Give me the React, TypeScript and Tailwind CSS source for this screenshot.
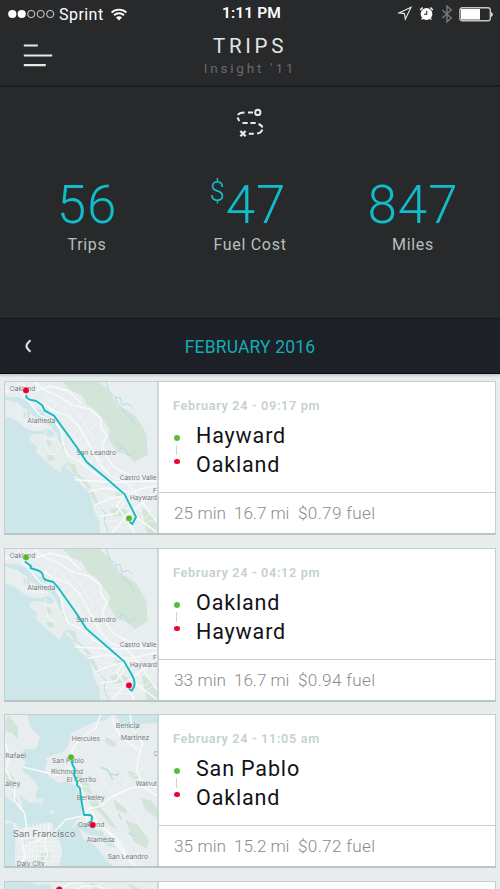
import type { ReactNode } from "react";

type Kind = "eastbay" | "bay" | "partial";
type Trip = {
  date: string;
  from: string;
  to: string;
  time: string;
  miles: string;
  fuel: string;
  map: Kind;
  reverse?: boolean;
  gap: string;
};

const trips: Trip[] = [
  { date: "February 24 - 09:17 pm", from: "Hayward", to: "Oakland", time: "25 min", miles: "16.7 mi", fuel: "$0.79 fuel", map: "eastbay", gap: "mb-[13px]" },
  { date: "February 24 - 04:12 pm", from: "Oakland", to: "Hayward", time: "33 min", miles: "16.7 mi", fuel: "$0.94 fuel", map: "eastbay", reverse: true, gap: "mb-3" },
  { date: "February 24 - 11:05 am", from: "San Pablo", to: "Oakland", time: "35 min", miles: "15.2 mi", fuel: "$0.72 fuel", map: "bay", gap: "mb-[13px]" },
];

const WATER = "#cce6ea";
const GREEN = "#d3e5d8";

function Place({ x, y, w, size = 20.5, children }: { x: number; y: number; w: number; size?: number; children: ReactNode }) {
  return (
    <text x={x} y={y} textLength={w} lengthAdjust="spacingAndGlyphs" fontSize={size} fill="#75797b" stroke="#f3f6f6" strokeWidth="1.2" paintOrder="stroke">
      {children}
    </text>
  );
}

function EastBayMap({ reverse }: { reverse?: boolean }) {
  return (
    <svg viewBox="15 22 456 453" className="block h-[151px] w-[152px] font-['Inter',sans-serif]">
      <rect x="0" y="0" width="500" height="500" fill="#e8eeef" />
      <path d="M187 22H298L330 50L352 95L378 104L410 128L440 180L443 240L405 262L380 240L350 232L325 190L330 165L290 110L262 92L245 60L215 48Z" fill={GREEN} />
      <path d="M200 262L225 270L232 298L262 318L275 345L290 370L300 400L285 385L266 350L250 322L225 300Z" fill={GREEN} />
      <path d="M330 405L360 395L385 410L370 425L340 425ZM425 400L455 415L471 440V475H440ZM345 350L368 360L360 372L345 365ZM70 115L85 105L90 125L75 132Z" fill={GREEN} />
      <path d="M15 126C35 128 52 140 76 160C96 172 115 172 132 166L150 162L163 178L150 190L129 178L100 180L89 188L92 200L112 214L108 232L140 262L180 294L188 274L204 262L199 278L210 288L224 302L241 330L264 350L276 380L282 410L298 440L300 475H15Z" fill={WATER} />
      <path d="M15 66L55 68L82 80L100 97L123 106L138 125L165 137L182 168L187 208L204 222L188 226L176 200L170 178L153 155L131 139L103 128L76 103L51 84L15 75Z" fill={WATER} />
      <path d="M89 186L102 179L129 178L154 188L185 208L188 226L204 236L200 262L188 274L180 294L140 262L108 232L112 214L92 200Z" fill="#e6edec" />
      <path d="M137 195L150 199L156 214L140 213Z M137 235L160 242L164 258L143 256Z" fill={GREEN} />
      <g fill="none" stroke="#b6dbe2" strokeWidth="3">
        <path d="M318 22L328 50L346 67L351 86L366 99L374 118L391 128L402 147M346 67L361 70L366 91L382 87L397 96" />
        <path d="M352 205L363 218L358 229M363 218L377 225L385 244L402 232M303 402L318 418L312 439L325 473" />
      </g>
      <g fill="none" stroke="#f8fafa" strokeWidth="4.5" strokeLinejoin="round">
        <path d="M72 22L70 50L77 66L95 79L137 92L160 108L207 125L240 158L300 270L329 302L375 320L405 350L471 444" />
        <path d="M102 22L135 48L179 66L215 90L269 104L302 130L302 155L320 182L306 215L325 255L345 279L387 300L425 312L471 323" />
        <path d="M15 52L50 40L106 48L150 35L205 48L244 86M70 62L120 122L165 142L183 168L190 210L205 244L240 260L280 295L326 318L376 360L410 428L471 473" />
        <path d="M223 315L334 322L471 320M265 350L320 340L390 351L471 331M282 392L330 372L408 355M300 425L348 418L374 383M337 473L390 414L471 350M376 360L350 390L404 474" />
      </g>
      <g fill="none" stroke="#f6f8f8" strokeWidth="2">
        <path d="M35 22L52 60M55 22L66 68M118 22L110 50M150 22L133 72M15 38L93 50M30 100L55 130L94 150L144 154M54 85L58 125M80 105L78 151M103 125L101 165M126 140L126 168M136 167L137 190L143 226L164 240L130 239M140 190L173 197L183 220" />
        <path d="M155 67L126 102M178 79L142 120M201 92L161 140M225 105L174 162M254 112L184 184M275 129L198 199M290 145L211 223M308 166L225 241M313 190L232 262M315 215L245 286M324 239L266 308M338 266L289 327M359 284L315 350M385 303L344 365M404 315L364 382M433 329L390 390M459 337L418 413M471 362L439 433" />
        <path d="M110 76L150 102L202 170L221 184L285 282L326 314M142 69L192 101L242 167L304 263M182 67L240 125L284 200M219 305L295 335L370 355M248 333L321 365L388 370M292 370L356 400L424 402M306 438L365 440L438 430M325 456L402 457L471 432" />
      </g>
      <Place x={29} y={50} w={77}>Oakland</Place>
      <Place x={82} y={145} w={84}>Alameda</Place>
      <Place x={229} y={242} w={119}>San Leandro</Place>
      <Place x={359} y={316} w={111}>Castro Valle</Place>
      <Place x={459} y={354} w={11}>F</Place>
      <Place x={390} y={377} w={81}>Hayward</Place>
      <path
        d={reverse
          ? "M76 61L93 73L91 79L111 85C124 88 130 94 130 108L137 115L160 121L174 137L230 216L258 260L326 319L373 360C389 391 410 413 402 436L395 447L389 443"
          : "M79 63L78 67L89 75L108 79L127 92L134 108L162 123L232 220L260 262L322 314L374 359L408 427L397 448L390 443"}
        fill="none" stroke="#14b9c2" strokeWidth="5.6" strokeLinejoin="round" strokeLinecap="round"
      />
      <circle cx="78" cy="47" r="9.5" fill={reverse ? "#56b72c" : "#e5002f"} stroke="#edf2f2" />
      <circle cx="387" cy="431" r="9.5" fill={reverse ? "#e5002f" : "#56b72c"} stroke="#edf2f2" />
    </svg>
  );
}

function BayMap() {
  return (
    <svg viewBox="15 22 456 453" className="block h-[151px] w-[152px] font-['Inter',sans-serif]">
      <rect x="0" y="0" width="500" height="500" fill="#e8eeef" />
      <path d="M82 22L92 60L120 87L112 117L100 126L75 122L58 146L79 163L64 187L95 211L116 239L105 263L115 282L95 287L57 262L68 285L65 310L42 286L15 265V335L45 345L60 365L145 344L158 350L162 376L180 402L187 439L177 475H337L307 445L286 414L250 393L237 363L216 359L227 339L245 328L242 272L229 236L201 221L175 227L146 204L134 184L142 160L132 151L188 133L204 115L214 75L282 44L319 36L335 22Z" fill={WATER} />
      <path d="M345 22L364 49L405 68L429 48L471 47V22Z" fill={WATER} />
      <path d="M15 350L35 344L46 375L45 475H15Z" fill={WATER} />
      <path d="M232 346L259 347L284 364L307 371L326 400L354 424L322 413L297 385L268 382L245 367L221 358Z" fill={WATER} />
      <path d="M111 276L127 268L131 279L120 290ZM147 308L162 306L165 317L151 319Z" fill="#e4eeea" />
      <path d="M26 22L54 58L55 97L37 76L16 70V40ZM15 190L41 208L48 247L20 233ZM33 255L55 280L47 297ZM224 178L248 195L244 210L263 224L278 260L304 303L326 327L350 363L330 354L301 317L274 291L259 262L246 242L224 205ZM340 276L377 299L382 320L349 308ZM376 337L413 351L449 401L438 423L400 399ZM421 267L455 281L471 303V330L436 307ZM314 83L350 102L345 119L319 107ZM383 189L410 197L416 214L390 211ZM64 399L103 393L103 405L66 410ZM118 438L152 431L145 458L120 473Z" fill={GREEN} />
      <g fill="none" stroke="#b6dae2" strokeWidth="4">
        <path d="M303 180L322 186L330 199L351 203L357 195M330 199L338 216M363 335L356 318M385 376L402 385" />
      </g>
      <g fill="none" stroke="#f9fafa" strokeWidth="4.5" strokeLinejoin="round">
        <path d="M15 104L28 145L17 188L45 235L43 278L73 315L80 356L66 391L74 445L64 475M69 178L135 194L174 203L204 192L222 166L215 129L239 94L287 61L302 22" />
        <path d="M164 372L196 336L249 324L266 304L302 296L329 271L366 253L400 240L455 235L471 238M391 22L396 63L428 107L416 143L410 190L432 240L471 264M338 35L359 84L411 125" />
        <path d="M221 166L222 204L242 230L249 268L251 311L263 338L295 345L333 382L358 420L399 475M250 320L276 311L293 347L350 391L380 442L411 475" />
        <path d="M150 344L143 378L132 410L144 438L131 475M162 375L141 388L101 402L74 413" />
      </g>
      <g fill="none" stroke="#f6f8f8" strokeWidth="2">
        <path d="M78 348V456M88 348V458M99 346V475M110 346V475M121 345V475M134 345V475M63 362H155M62 375H161M60 388H171M59 402H178M61 416H182M58 430H185M55 446H184M57 461H178" />
        <path d="M214 120L256 135M206 144L260 162M198 174L246 201M224 210L270 218M230 231L280 242M239 250L283 263M244 271L286 282M250 292L278 301M256 141L290 179L309 221L332 257M291 57L313 80L358 112L398 115M305 91L347 81M329 44L350 74M374 93L399 101L427 142M369 240L384 212L418 197L449 157M350 267L370 296L407 321L421 355L471 402M310 346L286 370M331 356L306 391M347 375L323 410M367 397L333 432M382 416L350 447M397 435L367 467M274 322L260 344M288 330L272 355" />
      </g>
      <Place x={347} y={60} w={71}>Benicia</Place>
      <Place x={215} y={100} w={85}>Hercules</Place>
      <Place x={362} y={96} w={86}>Martinez</Place>
      <Place x={461} y={146} w={10}>C</Place>
      <Place x={16} y={152} w={62}>Rafael</Place>
      <Place x={16} y={234} w={45}>alley</Place>
      <Place x={156} y={166} w={96}>San Pablo</Place>
      <Place x={153} y={198} w={96}>Richmond</Place>
      <Place x={200} y={222} w={88}>El Cerrito</Place>
      <Place x={407} y={234} w={64}>Walnut</Place>
      <Place x={230} y={276} w={84}>Berkeley</Place>
      <Place x={234} y={357} w={79}>Oakland</Place>
      <Place x={260} y={404} w={84}>Alameda</Place>
      <Place x={39} y={388} w={187} size={26}>San Francisco</Place>
      <Place x={323} y={453} w={121}>San Leandro</Place>
      <Place x={50} y={475} w={84}>Daly City</Place>
      <path d="M216 158L217 170L224 184L222 202L232 223L231 232L240 242L243 271L252 322L271 322L276 327L275 340L268 344" fill="none" stroke="#14b9c2" strokeWidth="5.6" strokeLinecap="round" strokeLinejoin="round" />
      <circle cx="213" cy="149" r="9.5" fill="#56b72c" stroke="#edf2f2" />
      <circle cx="278" cy="352" r="9.5" fill="#e5002f" stroke="#edf2f2" />
    </svg>
  );
}

function PartialMap() {
  return (
    <svg viewBox="15 522 456 453" className="block h-[151px] w-[152px]">
      <rect y="500" width="500" height="500" fill="#e8eeef" />
      <path d="M15 522H90L117 532L149 527L158 543L15 560Z" fill={WATER} />
      <path d="M269 522L294 535L295 550H278ZM385 524L417 542L410 550H394Z" fill={GREEN} />
      <path d="M182 543L210 526L249 522M221 550L250 534L300 536L327 550" fill="none" stroke="#fafafa" strokeWidth="4" />
      <circle cx="178" cy="545" r="9.5" fill="#e5002f" />
    </svg>
  );
}

function StatusBar() {
  return (
    <div className="relative flex h-7 items-center justify-between px-2 text-white">
      <div className="flex items-center">
        <svg className="h-[10px] w-[48px]" viewBox="0 0 48 10">
          <circle cx="4.3" cy="5" r="4.1" fill="currentColor" />
          <circle cx="13.7" cy="5" r="4.1" fill="currentColor" />
          <g fill="none" stroke="currentColor" strokeWidth=".8">
            <circle cx="23.2" cy="5" r="3.6" />
            <circle cx="32.7" cy="5" r="3.6" />
            <circle cx="42.2" cy="5" r="3.6" />
          </g>
        </svg>
        <span className="mt-[2px] ml-[3px] w-[45px] text-[16px] leading-5 tracking-[0.45px]">Sprint</span>
        <svg className="ml-[6px] h-[13px] w-[18px]" viewBox="0 0 18 13">
          <path d="M1.6 4.5C5.6.7 12.4.7 16.4 4.5M4 7.2c2.8-2.6 7.2-2.6 10 0" fill="none" stroke="currentColor" strokeWidth="1.9" />
          <path d="M6 9.4c1.6-1.5 4.4-1.5 6 0L9 12.5Z" fill="currentColor" />
        </svg>
      </div>
      <span className="absolute left-0 w-full text-center text-[15.5px] font-semibold tracking-[0.1px]"><span className="pl-[3px]">1:11 PM</span></span>
      <div className="flex items-center">
        <svg className="-mt-[2px] h-[15px] w-[15px]" viewBox="0 0 15 15">
          <path d="M14 1.3 2 6.9l5.4.7.9 5.6Z" fill="none" stroke="#e6e8e8" strokeWidth="1.1" strokeLinejoin="miter" />
        </svg>
        <svg className="-mt-[2px] ml-[7px] h-[15px] w-[15px]" viewBox="0 0 15 15">
          <circle cx="7.5" cy="8" r="5.9" fill="currentColor" />
          <path d="M1.2 4 3.6 1.6M11.4 1.6l2.4 2.4M3.6 12.3l-.9 1.2M11.4 12.3l.9 1.2" stroke="currentColor" strokeWidth="1.4" />
          <path d="M7.7 4.8v3.4H5" fill="none" stroke="#28292b" strokeWidth="1.1" />
        </svg>
        <svg className="ml-[7px] h-[18px] w-[12px]" viewBox="0 0 12 18">
          <path d="m1.3 5 9 8L6 16.8V1.2L10.3 5l-9 8" fill="none" stroke="#77797b" strokeWidth="1.4" />
        </svg>
        <svg className="-mr-[1px] ml-[6px] h-[15px] w-[34px]" viewBox="0 0 34 15">
          <rect x=".9" y=".8" width="30.4" height="13" rx="2.3" fill="none" stroke="#c3c5c5" strokeWidth="1.4" />
          <path d="M2 2H21V12.6H2Z" fill="currentColor" />
          <path d="M32.2 5c2 .8 2 4.2 0 5Z" fill="currentColor" />
        </svg>
      </div>
    </div>
  );
}

function Metric({ value, label, money }: { value: string; label: string; money?: boolean }) {
  return (
    <div className="flex flex-col items-center">
      <div className="relative h-[51px] text-[53px] leading-[51px] font-light tracking-[0.9px] text-[#10bdca]">
        {money && <span className="absolute top-[-2px] -left-[16px] text-[27px] leading-7 tracking-normal">$</span>}
        <span>{value}</span>
      </div>
      <div className="mt-[4px] text-base leading-5 tracking-[0.7px] text-[#b5c0be]">{label}</div>
    </div>
  );
}

function TripCard({ trip }: { trip: Trip }) {
  return (
    <article className={`flex h-[154px] shrink-0 overflow-hidden border border-b-2 border-[#c5cfd0] border-b-[#bcc5c6] bg-white ${trip.gap}`}>
      <div className="w-[154px] shrink-0 overflow-hidden border-r-2 border-[#cdd7d8]">
        {trip.map === "eastbay" ? <EastBayMap reverse={trip.reverse} /> : <BayMap />}
      </div>
      <div className="flex min-w-0 flex-1 flex-col">
        <div className="h-[111px] border-b border-[#c5d0d1] pt-[14px] pl-[14px]">
          <div className="text-[12.7px] leading-5 font-semibold tracking-[0.66px] text-[#c5d1d2]">{trip.date}</div>
          <div className="mt-[6px] flex">
            <div className="flex w-[23px] flex-col items-start pt-[13px] pl-[1px]">
              <i className="size-[5.5px] rounded-full bg-[#5dbc35]" />
              <i className="mt-[4px] ml-[2px] h-[10px] w-px bg-[#d3d3d3]" />
              <i className="mt-[4px] size-[5.5px] rounded-full bg-[#e70b32]" />
            </div>
            <div className="text-[21.5px] leading-[28.7px] tracking-[0.85px] text-[#111216]">
              <div>{trip.from}</div>
              <div>{trip.to}</div>
            </div>
          </div>
        </div>
        <div className="flex h-10 items-center pt-px pl-[15px] text-[17.2px] font-light text-[#8c8c8c]">
          <span className="w-[60px] tracking-[0.05px]">{trip.time}</span>
          <span className="w-[64px] tracking-[-0.1px]">{trip.miles}</span>
          <span className="tracking-[0.3px]">{trip.fuel}</span>
        </div>
      </div>
    </article>
  );
}

export default function App() {
  return (
    <main className="flex h-[889px] w-[500px] flex-col overflow-hidden bg-[#e7edec] font-['Roboto','Liberation_Sans',sans-serif] whitespace-nowrap">
      <header className="h-[87px] shrink-0 border-b-2 border-[#1d1e22] bg-[#28292b]">
        <StatusBar />
        <div className="grid grid-cols-[100px_300px_100px]">
          <svg className="mt-[15px] ml-[23px] h-[25px] w-[30px]" viewBox="0 0 30 25">
            <path d="M.8 2.5h14M.8 12.5h28.4M.8 22.2h22" stroke="#e3e9e8" strokeWidth="2.2" />
          </svg>
          <div className="text-center">
            <h1 className="mt-[6px] text-[20.5px] leading-6 tracking-[3.7px] text-[#e1e6e5]">TRIPS</h1>
            <p className="mt-px text-[13.5px] leading-[19px] tracking-[2.8px] text-[#68696b]">Insight '11</p>
          </div>
        </div>
      </header>
      <section className="flex h-[231px] shrink-0 flex-col bg-[#28292b]">
        <svg className="mt-[20px] ml-[236px] h-[31px] w-[28px]" viewBox="0 0 28 31" fill="none" stroke="#e5eaea" strokeWidth="2">
          <circle cx="21.8" cy="5.4" r="2.6" />
          <path d="M17 5.4h-5M8.5 5.4C5.3 5.5 3.1 6 1.8 8M1.5 10.5l1.8 3.6M6.5 16.1h5.2M14.5 16.1h5.2M22.5 17c2.1.7 3.4 1.5 3.9 3.5M26.3 22.5c-.6 2-2 3.7-5.2 4.1M17.8 26.8h-5" />
          <path d="m4.4 24 5.2 5.3m0-5.3-5.2 5.3" strokeWidth="2.3" />
        </svg>
        <div className="mt-[42px] grid grid-cols-[174px_152px_174px]">
          <Metric value="56" label="Trips" />
          <div className="[&>div>div:first-child]:left-[6px]"><Metric value="47" label="Fuel Cost" money /></div>
          <Metric value="847" label="Miles" />
        </div>
      </section>
      <nav className="grid h-[56px] shrink-0 grid-cols-[60px_380px_60px] items-center border-y border-t-[#15171b] border-b-[#070a0d] bg-[#1d2026] shadow-[0_2px_2px_#c2cbcc]">
        <svg className="ml-[24px] h-[14px] w-[9px]" viewBox="0 0 9 14">
          <path d="M6.5 1.2Q2.5 4.8 2.5 7T6.5 12.8" fill="none" stroke="#d6dfde" strokeWidth="2.2" />
        </svg>
        <h2 className="pt-[2px] text-center text-[17.5px] tracking-[0.15px] text-[#13adb6]">FEBRUARY 2016</h2>
      </nav>
      <section className="flex min-h-0 flex-1 flex-col overflow-hidden px-1 pt-[7px]">
        {trips.map((trip) => <TripCard key={trip.date} trip={trip} />)}
        <article className="flex h-[154px] shrink-0 overflow-hidden border border-[#c5cfd0] bg-white">
          <div className="w-[154px] shrink-0 overflow-hidden border-r-2 border-[#cdd7d8]">
            <PartialMap />
          </div>
        </article>
      </section>
    </main>
  );
}
